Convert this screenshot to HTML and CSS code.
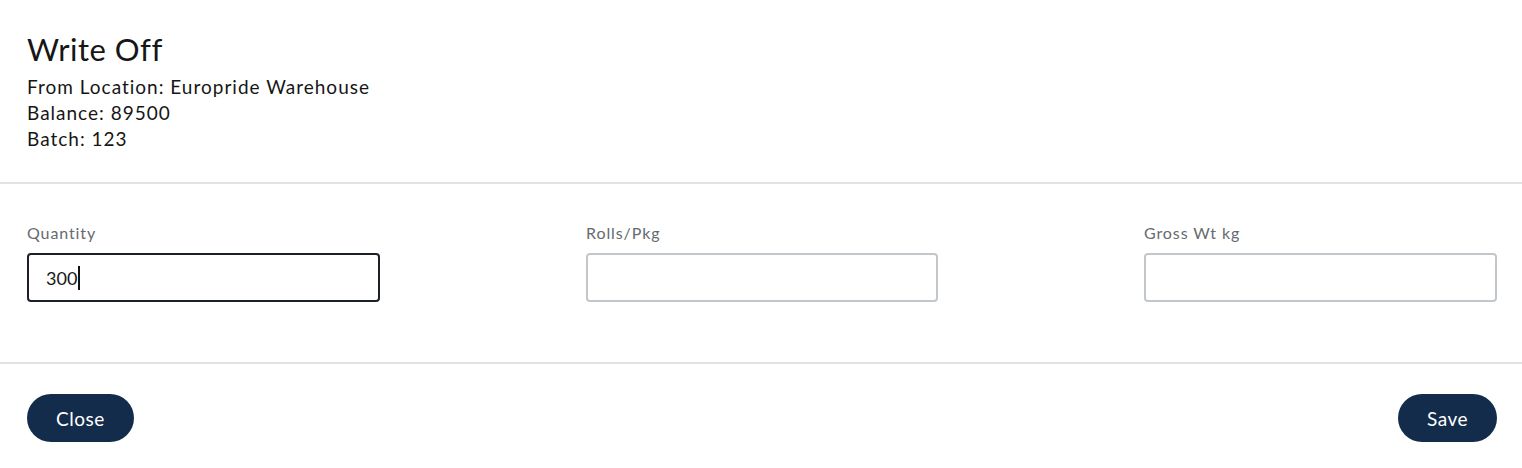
FILE: index.html
```html
<!DOCTYPE html>
<html lang="en">
<head>
<meta charset="utf-8">
<title>Write Off</title>
<link rel="stylesheet" href="styles.css">
</head>
<body>
<div class="modal">
  <header class="modal-header">
    <h1 class="title">Write Off</h1>
    <p class="meta">From Location: Europride Warehouse</p>
    <p class="meta">Balance: 89500</p>
    <p class="meta">Batch: 123</p>
  </header>
  <section class="modal-body">
    <div class="field">
      <label class="label">Quantity</label>
      <div class="input input-focus"><span class="value">300</span><span class="caret"></span></div>
    </div>
    <div class="field">
      <label class="label">Rolls/Pkg</label>
      <div class="input"></div>
    </div>
    <div class="field">
      <label class="label">Gross Wt kg</label>
      <div class="input"></div>
    </div>
  </section>
  <footer class="modal-footer">
    <button class="btn">Close</button>
    <button class="btn">Save</button>
  </footer>
</div>
</body>
</html>
```
FILE: styles.css
```css
html, body {
  margin: 0;
  padding: 0;
  background: #ffffff;
}
body {
  font-family: "Lato", "Noto Sans", sans-serif;
  color: #161616;
}
.modal {
  width: 1522px;
}
.modal-header {
  padding: 30px 27px 30px;
  border-bottom: 2px solid #e2e2e2;
}
.title {
  margin: 0 0 6px;
  font-size: 31px;
  font-weight: 400;
  line-height: 38px;
  letter-spacing: 0.5px;
}
.meta {
  margin: 0;
  font-size: 19px;
  line-height: 26px;
  letter-spacing: 1px;
}
.modal-body {
  display: grid;
  grid-template-columns: 353px 352px 353px;
  justify-content: space-between;
  padding: 38px 25px 60px 27px;
  border-bottom: 2px solid #e2e2e2;
}
.field {
  display: flex;
  flex-direction: column;
}
.label {
  font-size: 16px;
  line-height: 22px;
  color: #666a6e;
  margin-bottom: 9px;
  letter-spacing: 0.9px;
}
.input {
  box-sizing: border-box;
  height: 49px;
  border: 2px solid #c2c7cc;
  border-radius: 4px;
  display: flex;
  align-items: center;
  padding: 0 17px;
  font-size: 18px;
}
.input-focus {
  border-color: #1c2128;
}
.caret {
  display: inline-block;
  width: 2px;
  height: 24px;
  background: #111;
  margin-left: 1px;
}
.modal-footer {
  display: flex;
  justify-content: space-between;
  padding: 30px 25px 27px 27px;
}
.btn {
  font-family: "Lato", "Noto Sans", sans-serif;
  background: #132c4b;
  color: #ffffff;
  border: none;
  border-radius: 24px;
  height: 48px;
  padding: 0 29px;
  font-size: 19px;
  letter-spacing: 0.5px;
}
```
